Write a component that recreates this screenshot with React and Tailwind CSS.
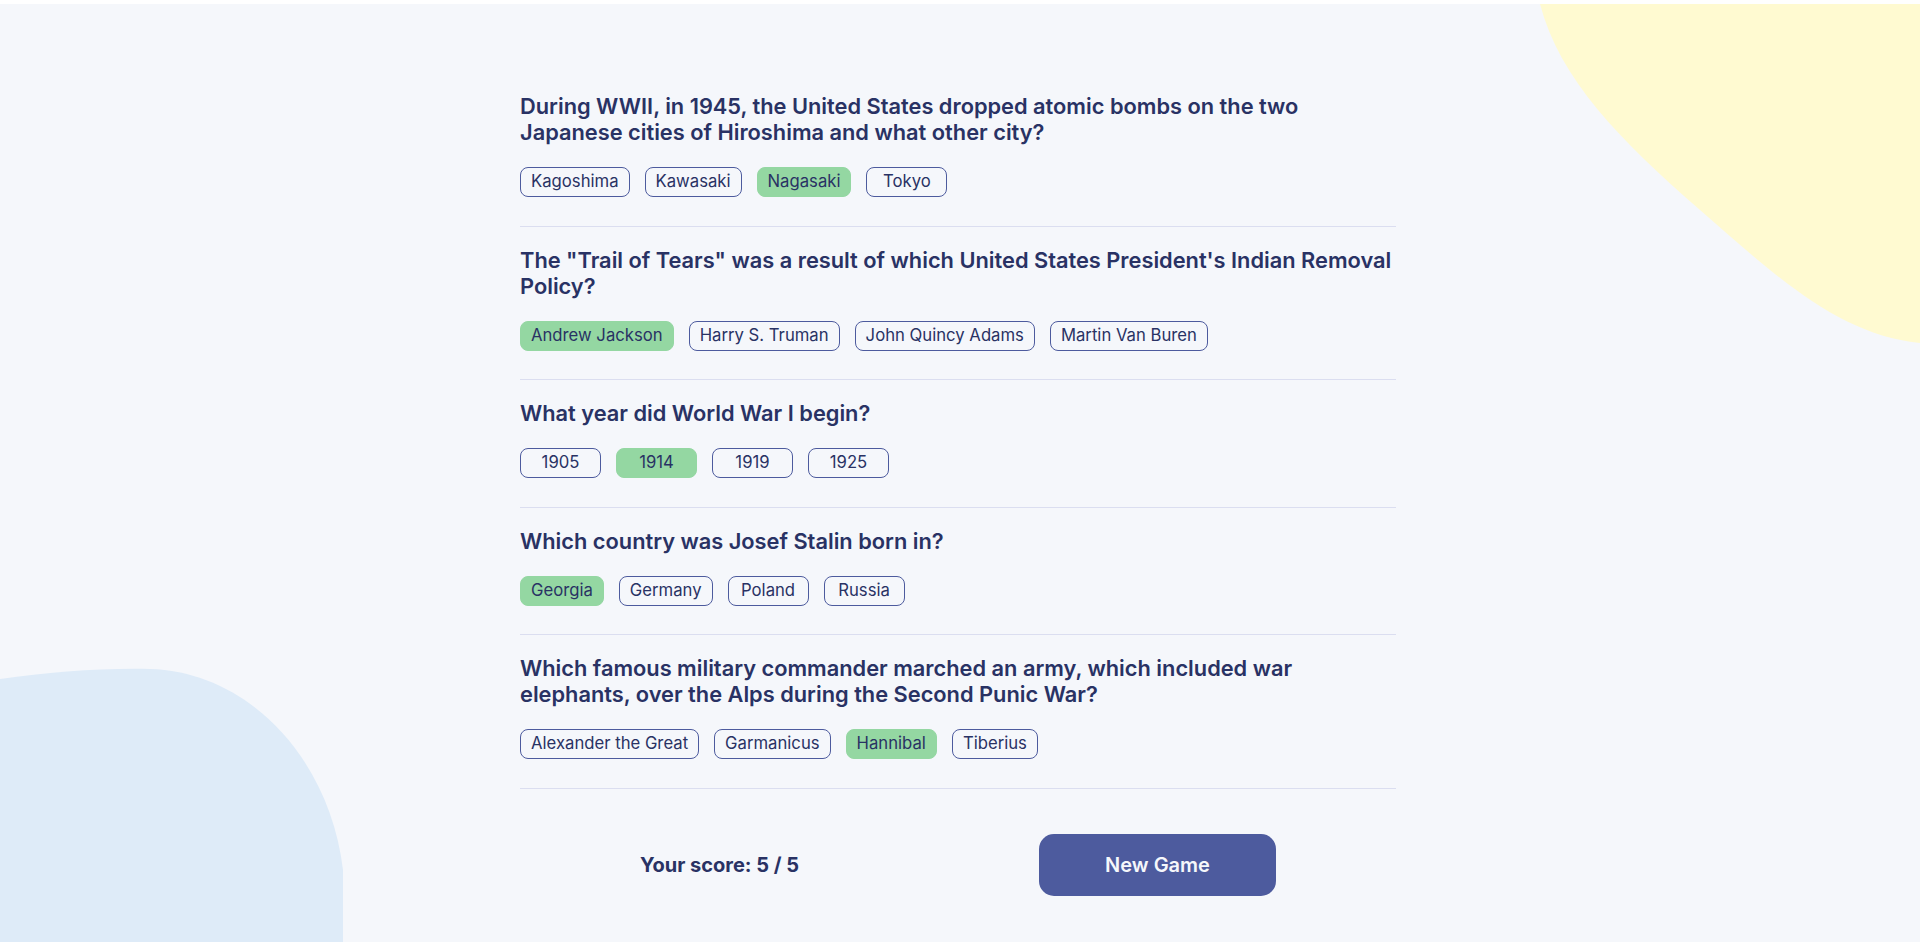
import React from "react";

const questions = [
  {
    question:
      "During WWII, in 1945, the United States dropped atomic bombs on the two Japanese cities of Hiroshima and what other city?",
    answers: ["Kagoshima", "Kawasaki", "Nagasaki", "Tokyo"],
    correct: "Nagasaki",
  },
  {
    question:
      "The \"Trail of Tears\" was a result of which United States President's Indian Removal Policy?",
    answers: ["Andrew Jackson", "Harry S. Truman", "John Quincy Adams", "Martin Van Buren"],
    correct: "Andrew Jackson",
  },
  {
    question: "What year did World War I begin?",
    answers: ["1905", "1914", "1919", "1925"],
    correct: "1914",
  },
  {
    question: "Which country was Josef Stalin born in?",
    answers: ["Georgia", "Germany", "Poland", "Russia"],
    correct: "Georgia",
  },
  {
    question:
      "Which famous military commander marched an army, which included war elephants, over the Alps during the Second Punic War?",
    answers: ["Alexander the Great", "Garmanicus", "Hannibal", "Tiberius"],
    correct: "Hannibal",
  },
];

function Answer({ text, correct }) {
  return (
    <button
      className={
        correct
          ? "h-[30px] min-w-[81px] px-[10px] rounded-[8px] border border-[#94D7A2] bg-[#94D7A2] text-[16.7px] text-[#293264]"
          : "h-[30px] min-w-[81px] px-[10px] rounded-[8px] border border-[#4D5B9E] bg-transparent text-[16.7px] text-[#293264]"
      }
    >
      {text}
    </button>
  );
}

function Question({ item }) {
  return (
    <div className="pt-[20px] pb-[28.5px] border-b border-[#DBDEF0]">
      <h2 className="text-[21.8px] leading-[26px] font-semibold text-[#293264] mb-[22px]">
        {item.question}
      </h2>
      <div className="flex gap-[15px]">
        {item.answers.map((a) => (
          <Answer key={a} text={a} correct={a === item.correct} />
        ))}
      </div>
    </div>
  );
}

export default function App() {
  return (
    <div className="pt-[4px] bg-white font-['Inter','Noto_Sans',sans-serif]">
      <div className="relative h-[938px] overflow-hidden bg-[#F5F7FB]">
        {/* background blobs */}
        <svg
          className="absolute top-0 right-0"
          width="390"
          height="345"
          viewBox="1530 4 390 345"
        >
          <path
            d="M1540 4 C1560 80, 1620 140, 1700 210 C1780 280, 1840 335, 1920 343 L1920 4 Z"
            fill="#FFFAD1"
          />
        </svg>
        <svg
          className="absolute bottom-0 left-0"
          width="345"
          height="275"
          viewBox="0 667 345 275"
        >
          <path
            d="M0 679 C50 672, 100 668, 150 669 C250 672, 330 760, 343 870 L343 942 L0 942 Z"
            fill="#DEEBF8"
          />
        </svg>

        <div className="relative pr-[4px]">
          <div className="w-[876px] mx-auto pt-[69px]">
            {questions.map((q, i) => (
              <Question key={i} item={q} />
            ))}

            <div className="flex justify-around items-center pt-[45.5px]">
              <p className="text-[20px] font-bold text-[#293264]">Your score: 5 / 5</p>
              <button className="w-[237px] h-[62px] rounded-[15px] bg-[#4D5B9E] text-[#F5F7FB] text-[20px] font-semibold">
                New Game
              </button>
            </div>
          </div>
        </div>
      </div>
    </div>
  );
}
